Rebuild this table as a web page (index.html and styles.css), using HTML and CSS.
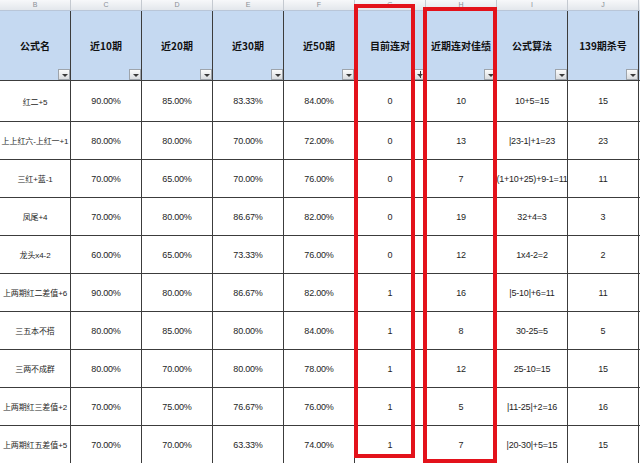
FILE: index.html
```html
<!DOCTYPE html>
<html lang="zh">
<head>
<meta charset="utf-8">
<link rel="stylesheet" href="styles.css">
</head>
<body>
<div class="sheet">
  <div class="letters">
    <span>B</span><span>C</span><span>D</span><span>E</span><span>F</span><span>G</span><span>H</span><span>I</span><span>J</span><span></span>
  </div>
  <div class="grid">
    <div class="hd">公式名<i class="fb"></i></div>
    <div class="hd">近10期<i class="fb"></i></div>
    <div class="hd">近20期<i class="fb"></i></div>
    <div class="hd">近30期<i class="fb"></i></div>
    <div class="hd">近50期<i class="fb"></i></div>
    <div class="hd">目前连对<i class="fb on"></i></div>
    <div class="hd">近期连对佳绩<i class="fb"></i></div>
    <div class="hd">公式算法<i class="fb"></i></div>
    <div class="hd">139期杀号<i class="fb"></i></div>
    <div class="hd blank"></div>

    <div>红二+5</div><div>90.00%</div><div>85.00%</div><div>83.33%</div><div>84.00%</div><div>0</div><div>10</div><div>10+5=15</div><div>15</div><div></div>
    <div>上上红六-上红一+1</div><div>80.00%</div><div>80.00%</div><div>70.00%</div><div>72.00%</div><div>0</div><div>13</div><div>|23-1|+1=23</div><div>23</div><div></div>
    <div>三红+蓝-1</div><div>70.00%</div><div>65.00%</div><div>70.00%</div><div>76.00%</div><div>0</div><div>7</div><div>(1+10+25)+9-1=11</div><div>11</div><div></div>
    <div>凤尾+4</div><div>70.00%</div><div>80.00%</div><div>86.67%</div><div>82.00%</div><div>0</div><div>19</div><div>32+4=3</div><div>3</div><div></div>
    <div>龙头x4-2</div><div>60.00%</div><div>65.00%</div><div>73.33%</div><div>76.00%</div><div>0</div><div>12</div><div>1x4-2=2</div><div>2</div><div></div>
    <div>上两期红二差值+6</div><div>90.00%</div><div>80.00%</div><div>86.67%</div><div>82.00%</div><div>1</div><div>16</div><div>|5-10|+6=11</div><div>11</div><div></div>
    <div>三五本不搭</div><div>80.00%</div><div>85.00%</div><div>80.00%</div><div>84.00%</div><div>1</div><div>8</div><div>30-25=5</div><div>5</div><div></div>
    <div>三两不成群</div><div>80.00%</div><div>70.00%</div><div>80.00%</div><div>78.00%</div><div>1</div><div>12</div><div>25-10=15</div><div>15</div><div></div>
    <div>上两期红三差值+2</div><div>70.00%</div><div>75.00%</div><div>76.67%</div><div>76.00%</div><div>1</div><div>5</div><div>|11-25|+2=16</div><div>16</div><div></div>
    <div>上两期红五差值+5</div><div>70.00%</div><div>70.00%</div><div>63.33%</div><div>74.00%</div><div>1</div><div>7</div><div>|20-30|+5=15</div><div>15</div><div></div>
  </div>
  <div class="mark m1"></div>
  <div class="mark m2"></div>
</div>
</body>
</html>
```

FILE: styles.css
```css
html, body {
  margin: 0;
  padding: 0;
  background: #ffffff;
  overflow: hidden;
}
.sheet {
  position: relative;
  width: 640px;
  height: 463px;
  overflow: hidden;
  font-family: "Liberation Sans", "Noto Sans CJK SC", sans-serif;
}
.letters {
  display: grid;
  grid-template-columns: repeat(10, 71px);
  height: 10px;
  border-bottom: 1px solid #b9c6d8;
  background: linear-gradient(#f7f8fa, #e3e7ec);
}
.letters span {
  border-right: 1px solid #c4c9d0;
  font-size: 7px;
  line-height: 10px;
  color: #8a8f96;
  text-align: center;
}
.grid {
  display: grid;
  grid-template-columns: repeat(10, 70px);
  grid-template-rows: 69px 40px repeat(9, 37px);
  gap: 1px;
  background: #3c3c3c;
  width: 710px;
}
.grid > div {
  background: #ffffff;
  display: flex;
  align-items: center;
  justify-content: center;
  white-space: nowrap;
  overflow: hidden;
  font-size: 9px;
  color: #1e1e1e;
  letter-spacing: -0.2px;
}
.grid > div:nth-child(10n+11) {
  font-size: 8px;
  letter-spacing: -0.1px;
}
.grid > .hd {
  position: relative;
  background: #c5d9f1;
  font-family: "Noto Sans CJK SC", "Liberation Sans", sans-serif;
  font-weight: bold;
  font-size: 10px;
  color: #111111;
  letter-spacing: 0;
  padding-bottom: 1px;
  overflow: visible;
}
.fb {
  position: absolute;
  right: 0;
  bottom: 0;
  width: 12px;
  height: 11px;
  box-sizing: border-box;
  border: 1px solid #9ea4ab;
  background: linear-gradient(#fbfbfb, #d9dcdf);
}
.fb::after {
  content: "";
  position: absolute;
  left: 3px;
  top: 4px;
  border-left: 3px solid transparent;
  border-right: 3px solid transparent;
  border-top: 3px solid #3a3a3a;
}
.fb.on::before {
  content: "";
  position: absolute;
  left: 6px;
  top: 1px;
  width: 1px;
  height: 7px;
  background: #3a3a3a;
}
.mark {
  position: absolute;
  box-sizing: border-box;
  border: 4px solid #e3121b;
}
.m1 {
  left: 354px;
  top: 4px;
  width: 61px;
  height: 454px;
}
.m2 {
  left: 423px;
  top: 7px;
  width: 74px;
  height: 456px;
}
```
